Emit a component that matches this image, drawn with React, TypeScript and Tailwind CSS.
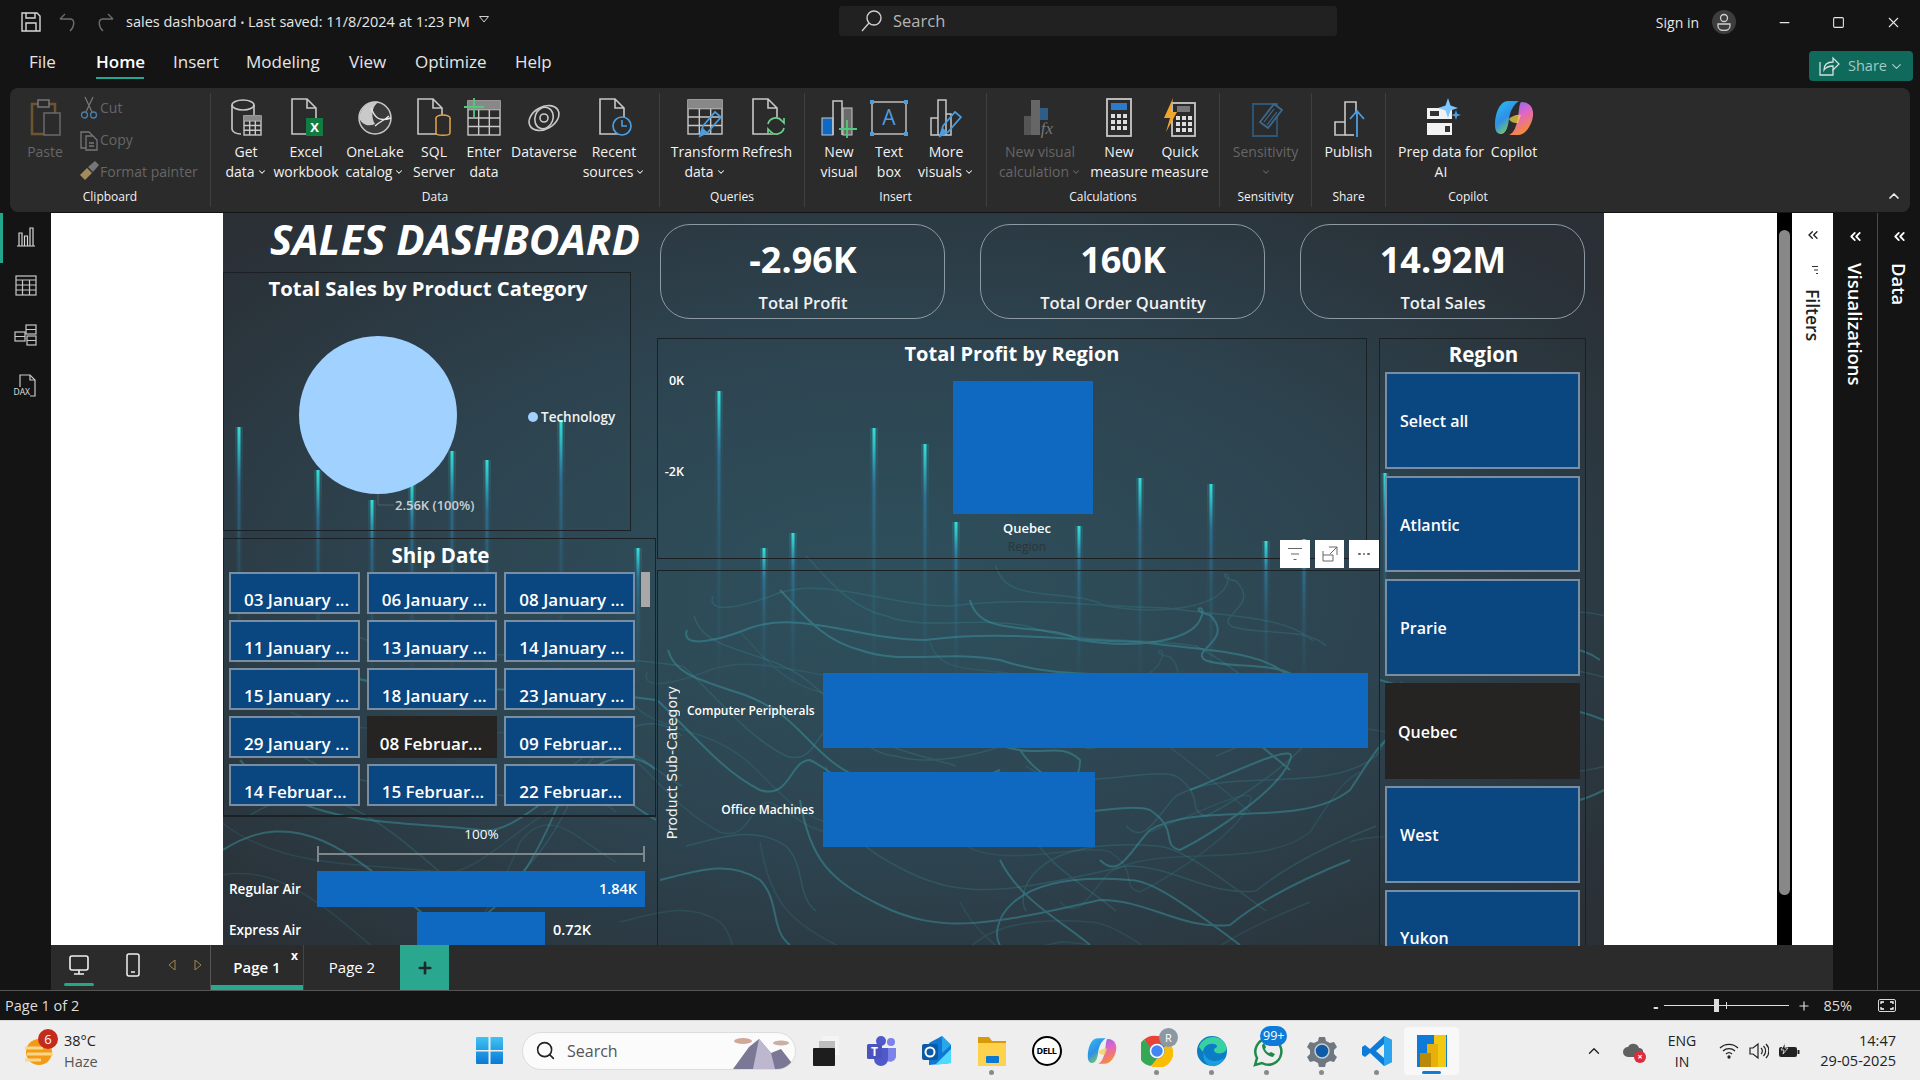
import type { ReactNode } from "react";
import { ChevronDown, Minus, Square, X, Plus, ChevronUp, ChevronsLeft, Search } from "lucide-react";

const L = "#c8c8c8";
const streaks = [
  [239, 427], [318, 470], [372, 500], [412, 480], [452, 451], [487, 460], [561, 420], [638, 548],
  [719, 391], [764, 548], [793, 533], [874, 428], [925, 444], [956, 522], [1079, 526], [1140, 478],
  [1211, 484], [1266, 541], [1304, 539], [1385, 473],
];
const contours = [
  "M668 650 C675 675 700 680 745 695 C790 712 800 735 830 760 C860 785 900 790 930 800",
  "M687 630 C680 650 720 640 750 628 C800 610 860 640 925 640 C1000 630 1060 640 1140 642 C1200 650 1260 650 1287 675",
  "M657 700 C690 730 720 770 760 790 C790 800 790 760 810 760 C830 770 850 790 870 790 C900 800 960 790 1000 770",
  "M780 590 C800 610 820 640 860 650 C900 665 950 650 1000 660 C1060 680 1110 670 1170 680 C1200 695 1230 720 1290 770",
  "M970 600 C980 640 1040 620 1080 640 C1140 650 1190 640 1200 620 C1210 600 1185 610 1210 615 C1235 640 1190 650 1205 660 C1230 670 1280 660 1300 680",
  "M1020 750 C1040 780 1080 800 1080 760 C1060 740 1040 760 1000 745",
  "M1000 800 C1040 830 1120 800 1150 810 C1180 830 1160 845 1180 850 C1210 835 1280 790 1290 760 C1300 740 1240 770 1190 790",
  "M1100 860 C1120 880 1130 850 1150 830 C1200 800 1300 830 1350 790 C1370 760 1380 740 1400 730",
  "M1240 945 C1180 900 1150 880 1130 880 C1000 870 990 930 1000 945",
  "M800 800 C810 860 830 880 880 905 C940 935 990 925 1100 900 C1150 900 1180 930 1230 925 C1260 900 1300 880 1350 860",
  "M660 880 C700 870 730 860 760 880 C780 900 770 930 790 945",
  "M1000 860 C1020 900 1060 920 1090 945",
  "M1380 680 C1440 700 1530 690 1604 720",
  "M1390 800 C1450 780 1530 830 1604 790",
  "M223 850 C300 800 360 860 430 920 C470 945 520 900 560 800 C590 760 620 800 656 820",
  "M240 760 C300 830 400 820 480 830 C530 840 600 720 656 770",
  "M330 670 C400 700 520 680 656 700",
  "M1440 640 C1480 660 1560 630 1600 660",
];

function DocShape({ x = 8, y = 2, w = 22, h = 34, c = L }: { x?: number; y?: number; w?: number; h?: number; c?: string }) {
  return <path d={`M${x} ${y}h${w - 9}l9 9v${h - 9}h-${w}z M${x + w - 9} ${y}v9h9`} fill="none" stroke={c} strokeWidth="1.6" />;
}

function Table({ x, y, w, h, c = L }: { x: number; y: number; w: number; h: number; c?: string }) {
  return (
    <g stroke={c} strokeWidth="1.4" fill="none">
      <rect x={x} y={y} width={w} height={h} />
      <path d={`M${x} ${y + h / 4}h${w} M${x} ${y + h / 2}h${w} M${x} ${y + (3 * h) / 4}h${w} M${x + w / 3} ${y + h / 4}v${(3 * h) / 4} M${x + (2 * w) / 3} ${y + h / 4}v${(3 * h) / 4}`} />
      <rect x={x} y={y} width={w} height={h / 4} fill="#888" stroke="none" />
    </g>
  );
}

function Bars({ x = 10, c = L }: { x?: number; c?: string }) {
  return <path d={`M${x} 37V20h7V2h8v14h5v21z M${x + 7} 20v17 M${x + 15} 16v21`} fill="none" stroke={c} strokeWidth="1.5" />;
}

function Pencil({ x = 0, y = 0 }: { x?: number; y?: number }) {
  return (
    <g transform={`translate(${x} ${y})`}>
      <path d="M0 22L3 12L15 -2L21 3L8 18z" fill="none" stroke="#4b9ee0" strokeWidth="1.7" />
      <path d="M0 22L3 14L7 18z" fill="#4b9ee0" />
    </g>
  );
}

function Ico({ children, s = 40 }: { children: ReactNode; s?: number }) {
  return <svg width={s} height={s} viewBox="0 0 40 40">{children}</svg>;
}

function CopilotMark({ s = 40, id }: { s?: number; id: string }) {
  return (
    <svg width={s} height={s} viewBox="0 0 40 40">
      <defs>
        <linearGradient id={id + "a"} x1="0" y1="0" x2="0.6" y2="1"><stop offset="0" stopColor="#29c3f0" /><stop offset="0.55" stopColor="#2f8fe8" /><stop offset="1" stopColor="#8bd34a" /></linearGradient>
        <linearGradient id={id + "b"} x1="0" y1="0" x2="0.4" y2="1"><stop offset="0" stopColor="#7a6cf0" /><stop offset="0.5" stopColor="#e065c8" /><stop offset="1" stopColor="#f78a3a" /></linearGradient>
      </defs>
      <path d="M14 3h11c-5 3-9 10-10 18c-1 8-3 15-8 15c-3 0-6-2-6-9C1 15 6 3 14 3z" fill={`url(#${id}a)`} />
      <path d="M27 4c5 0 11 2 12 10c1 9-6 23-15 23H15c5-2 7-8 9-17c1-7 1-13 3-16z" fill={`url(#${id}b)`} />
      <path d="M15 21c3-3 8-5 12-4l-3 8c-3 0-7 0-9-4z" fill="#f3d34a" opacity="0.75" />
    </svg>
  );
}

const icons: Record<string, ReactNode> = {
  getData: <Ico><ellipse cx="17" cy="7" rx="11" ry="5" fill="none" stroke={L} strokeWidth="1.6" /><path d="M6 7v24c0 3 4 5 9 5M28 7v10" fill="none" stroke={L} strokeWidth="1.6" /><Table x={18} y={18} w={17} h={19} /></Ico>,
  excel: <Ico><DocShape x={6} y={1} w={24} h={35} /><rect x={20} y={20} width={17} height={18} fill="#107c41" /><text x={28.5} y={34} textAnchor="middle" fontSize="13" fontWeight="700" fill="#fff" fontFamily="Open Sans, sans-serif">X</text></Ico>,
  oneLake: <Ico><circle cx="20" cy="20" r="16" fill="#3a3a3a" stroke={L} strokeWidth="1.5" /><path d="M4 20c2-12 12-18 20-16c-8 4-8 16-4 22c-6 3-13 1-16-6z" fill="#c9c9c9" /><path d="M16 10c4 10 8 14 20 10M20 28c4-4 10-6 14-10" stroke="#e8e8e8" strokeWidth="1.4" fill="none" /></Ico>,
  sql: <Ico><DocShape x={4} y={1} w={24} h={35} /><ellipse cx="29" cy="20" rx="7" ry="3" fill="#2b2b2b" stroke="#e8a34a" strokeWidth="1.5" /><path d="M22 20v15c0 3 14 3 14 0V20" fill="#2b2b2b" stroke="#e8a34a" strokeWidth="1.5" /></Ico>,
  enter: <Ico><Table x={4} y={3} w={32} h={34} /><path d="M10 -1v20M0 9h20" stroke="#4fc97a" strokeWidth="1.8" /></Ico>,
  dataverse: <Ico><g fill="none" stroke={L} strokeWidth="1.6"><ellipse cx="20" cy="20" rx="16" ry="11" transform="rotate(-30 20 20)" /><ellipse cx="20" cy="20" rx="9" ry="11" transform="rotate(20 20 20)" /><circle cx="20" cy="20" r="4" /></g></Ico>,
  recent: <Ico><DocShape x={6} y={1} w={24} h={35} /><circle cx="28" cy="28" r="9" fill="#2b2b2b" stroke="#4b9ee0" strokeWidth="1.7" /><path d="M28 22v6h5" fill="none" stroke="#4b9ee0" strokeWidth="1.6" /></Ico>,
  transform: <Ico><Table x={3} y={2} w={34} h={34} /><Pencil x={15} y={16} /></Ico>,
  refresh: <Ico><DocShape x={6} y={1} w={24} h={35} /><circle cx="29" cy="28" r="9" fill="#2b2b2b" /><path d="M21 26a8 8 0 0 1 14-3l2 2v-5M37 30a8 8 0 0 1-14 3l-2-2v5" fill="none" stroke="#6ad08a" strokeWidth="1.7" /></Ico>,
  newVisual: <Ico><rect x="3" y="20" width="11" height="17" fill="#0f69c0" stroke={L} strokeWidth="1" /><path d="M14 37V3h9v34" fill="none" stroke={L} strokeWidth="1.5" /><rect x="24" y="10" width="9" height="27" fill="#6b6b6b" stroke={L} strokeWidth="1" /><path d="M28 22v18M20 31h18" stroke="#4fc97a" strokeWidth="1.8" /></Ico>,
  textBox: <Ico><rect x="3" y="4" width="34" height="32" fill="none" stroke={L} strokeWidth="1.4" /><g fill="#4b9ee0"><rect x="1" y="2" width="4" height="4" /><rect x="35" y="2" width="4" height="4" /><rect x="1" y="34" width="4" height="4" /><rect x="35" y="34" width="4" height="4" /></g><text x="20" y="27" textAnchor="middle" fontSize="21" fill="#4b9ee0" fontFamily="Open Sans, sans-serif">A</text></Ico>,
  more: <Ico><Bars x={5} /><Pencil x={14} y={16} /></Ico>,
  calc: <Ico><rect x="4" y="18" width="7" height="19" fill="#555" /><rect x="11" y="2" width="9" height="35" fill="#666" /><rect x="20" y="10" width="8" height="12" fill="#2e5d85" /><text x="27" y="36" textAnchor="middle" fontSize="17" fontStyle="italic" fill="#777" fontFamily="Liberation Serif, serif">fx</text></Ico>,
  measure: <Ico><rect x="8" y="1" width="24" height="37" fill="none" stroke={L} strokeWidth="1.8" /><rect x="12" y="5" width="16" height="7" fill="#2c7ac9" /><g fill="#ddd">{[16, 22, 28].map((y) => [12, 18, 24].map((x) => <rect key={x + "-" + y} x={x} y={y} width="4" height="4" />))}</g></Ico>,
  quick: <Ico><rect x="12" y="5" width="23" height="33" fill="none" stroke={L} strokeWidth="1.8" /><rect x="17" y="8" width="13" height="6" fill="#777" /><g fill="#ddd">{[18, 24, 30].map((y) => [16, 22, 28].map((x) => <rect key={x + "-" + y} x={x} y={y} width="4" height="4" />))}</g><path d="M13 0L4 20h6L6 34L17 14h-6z" fill="#f0a52a" /></Ico>,
  sens: <Ico><path d="M7 6h24v32H7z" fill="none" stroke="#2f5878" strokeWidth="1.8" /><path d="M14 24L28 6l8 6L22 30z" fill="#2b2b2b" stroke="#3c6a8e" strokeWidth="1.8" /><path d="M18 24l10-13M21 27l10-13" stroke="#3c6a8e" strokeWidth="1.2" /></Ico>,
  publish: <Ico><path d="M6 37V24h10v13zM16 24V4h11v12" fill="none" stroke={L} strokeWidth="1.6" /><path d="M16 37h9" stroke={L} strokeWidth="1.6" /><path d="M28 39V13M21 21l7-8l7 8" fill="none" stroke="#4b9ee0" strokeWidth="1.8" /></Ico>,
  prep: <Ico><rect x="6" y="10" width="25" height="11" fill="#f2f2f2" /><rect x="6" y="25" width="25" height="12" fill="#f2f2f2" /><rect x="9" y="13" width="9" height="5" fill="#333" /><rect x="24" y="28" width="5" height="6" fill="#333" /><path d="M27 0l2.5 7.5L37 10l-7.5 2.5L27 20l-2.5-7.5L17 10l7.5-2.5z" fill="#7dc6ff" /><path d="M35 12l1.2 3.8L40 17l-3.8 1.2L35 22l-1.2-3.8L30 17l3.8-1.2z" fill="#4b9ee0" /></Ico>,
};

function Item({ w, icon, l1, l2, chev, dim }: { w: number; icon: ReactNode; l1: string; l2?: string; chev?: boolean; dim?: boolean }) {
  return (
    <div style={{ width: w }} className={`flex flex-col items-center text-[14px] leading-[20px] whitespace-nowrap ${dim ? "text-[#666666]" : "text-[#f2f2f2]"}`}>
      <div className="h-[40px] mb-[4px] flex justify-center">{icon}</div>
      <div>{l1}</div>
      <div className="flex items-center gap-[2px] h-[20px]">
        {l2}
        {chev && <ChevronDown size={10} strokeWidth={2.5} />}
      </div>
    </div>
  );
}

function Group({ w, label, pl = 0, last, children }: { w: number; label: string; pl?: number; last?: boolean; children: ReactNode }) {
  return (
    <div style={{ width: w }} className={`h-[114px] mt-[5px] flex flex-col shrink-0 ${last ? "" : "border-r border-[#3f3f3f]"}`}>
      <div style={{ paddingLeft: pl }} className="h-[94px] pt-[5px] flex">{children}</div>
      <div className="h-[20px] text-center text-[12px] leading-[20px] text-[#f2f2f2]">{label}</div>
    </div>
  );
}

function Ribbon() {
  return (
    <div className="mx-[10px] h-[124px] rounded-[8px] bg-[#2b2b2b] flex relative">
      <Group w={201} label="Clipboard">
        <Item w={70} dim l1="Paste" icon={<Ico><rect x="7" y="6" width="23" height="30" fill="none" stroke="#6e5530" strokeWidth="2.5" /><rect x="13" y="2" width="11" height="7" fill="#2b2b2b" stroke="#777" strokeWidth="1.5" /><rect x="19" y="15" width="16" height="22" fill="#2b2b2b" stroke="#666" strokeWidth="1.6" /></Ico>} />
        <div className="flex flex-col text-[14px] text-[#666666] -mt-[6px]">
          <div className="h-[33px] flex items-center gap-[2px]">
            <svg width="18" height="24" viewBox="0 0 18 24" fill="none" stroke="#777" strokeWidth="1.3"><path d="M5 1l7 15M13 1L6 16" /><circle cx="4.5" cy="19" r="3" stroke="#4a7ea8" /><circle cx="13.5" cy="19" r="3" stroke="#4a7ea8" /></svg>
            <span>Cut</span>
          </div>
          <div className="h-[33px] flex items-center gap-[2px]">
            <svg width="18" height="22" viewBox="0 0 18 22" fill="none" stroke="#777" strokeWidth="1.3"><path d="M1 3h8l3 3v13H1z" /><path d="M6 7h7l4 4v10H6z" fill="#2b2b2b" /><path d="M9 14h5M9 17h5" /></svg>
            <span>Copy</span>
          </div>
          <div className="h-[32px] flex items-center gap-0 -ml-[2px]">
            <svg width="22" height="22" viewBox="0 0 22 22"><path d="M2 15l7-7l5 5l-7 7z" fill="#a58a5c" /><path d="M10 7l7-6l4 4l-6 7z" fill="#777" /></svg>
            <span>Format painter</span>
          </div>
        </div>
      </Group>
      <Group w={449} label="Data" pl={3}>
        <Item w={64} l1="Get" l2="data" chev icon={icons.getData} />
        <Item w={56} l1="Excel" l2="workbook" icon={icons.excel} />
        <Item w={82} l1="OneLake" l2="catalog" chev icon={icons.oneLake} />
        <Item w={36} l1="SQL" l2="Server" icon={icons.sql} />
        <Item w={64} l1="Enter" l2="data" icon={icons.enter} />
        <Item w={56} l1="Dataverse" icon={icons.dataverse} />
        <Item w={84} l1="Recent" l2="sources" chev icon={icons.recent} />
      </Group>
      <Group w={145} label="Queries" pl={12}>
        <Item w={66} l1="Transform" l2="data" chev icon={icons.transform} />
        <Item w={58} l1="Refresh" icon={icons.refresh} />
      </Group>
      <Group w={182} label="Insert" pl={6}>
        <Item w={56} l1="New" l2="visual" icon={icons.newVisual} />
        <Item w={44} l1="Text" l2="box" icon={icons.textBox} />
        <Item w={70} l1="More" l2="visuals" chev icon={icons.more} />
      </Group>
      <Group w={233} label="Calculations">
        <Item w={106} dim l1="New visual" l2="calculation" chev icon={icons.calc} />
        <Item w={52} l1="New" l2="measure" icon={icons.measure} />
        <Item w={70} l1="Quick" l2="measure" icon={icons.quick} />
      </Group>
      <Group w={92} label="Sensitivity">
        <Item w={91} dim l1="Sensitivity" chev icon={icons.sens} />
      </Group>
      <Group w={74} label="Share">
        <Item w={73} l1="Publish" icon={icons.publish} />
      </Group>
      <Group w={164} label="Copilot" last>
        <Item w={110} l1="Prep data for" l2="AI" icon={icons.prep} />
        <Item w={36} l1="Copilot" icon={<CopilotMark id="rb" />} />
      </Group>
      <div className="ml-auto mr-[8px] self-end mb-[8px] text-[#eeeeee]"><ChevronUp size={16} strokeWidth={2.5} /></div>
    </div>
  );
}

function TitleBar() {
  return (
    <div className="h-[44px] flex items-center text-[#e6e6e6] relative">
      <svg className="ml-[21px]" width="20" height="20" viewBox="0 0 20 20" fill="none" stroke="#d8d8d8" strokeWidth="1.4"><path d="M1 1h15l3 3v15H1z" /><path d="M5 1v5h9V1M5 19v-8h10v8" /></svg>
      <svg className="ml-[18px]" width="18" height="20" viewBox="0 0 18 20" fill="none" stroke="#6d6d6d" strokeWidth="1.4"><path d="M1 7l5-5M1 7h10c5 0 5 7 0 12" /></svg>
      <svg className="ml-[19px]" width="18" height="20" viewBox="0 0 18 20" fill="none" stroke="#6d6d6d" strokeWidth="1.4"><path d="M17 7l-5-5M17 7H7c-5 0-5 7 0 12" /></svg>
      <div className="ml-[12px] text-[14.5px] whitespace-nowrap">sales dashboard <span className="text-[10px] align-middle">•</span> Last saved: 11/8/2024 at 1:23 PM</div>
      <svg className="ml-[9px] -mt-[6px]" width="10" height="7" viewBox="0 0 10 7" fill="none" stroke="#cfcfcf"><path d="M0.5 0.5h9L5 6z" /></svg>
      <div className="absolute left-[839px] top-[6px] w-[498px] h-[30px] rounded-[3px] bg-[#212121] flex items-center pl-[21px] text-[16.5px] text-[#b5b5b5]">
        <svg width="24" height="24" viewBox="0 0 24 24" fill="none" stroke="#cfcfcf" strokeWidth="1.4"><circle cx="14" cy="9" r="7" /><path d="M9 14l-7 8" /></svg>
        <span className="ml-[9px]">Search</span>
      </div>
      <div className="ml-auto flex items-center">
        <span className="text-[14px]">Sign in</span>
        <div className="ml-[13px] w-[24px] h-[24px] rounded-full bg-[#3d3d3d] flex items-center justify-center">
          <svg width="16" height="18" viewBox="0 0 16 18" fill="none" stroke="#cfcfcf" strokeWidth="1.3"><circle cx="8" cy="5" r="3.5" /><path d="M2 11h12v2c0 6-12 6-12 0z" /></svg>
        </div>
        <div className="w-[54px] ml-[21px] flex justify-center"><Minus size={15} /></div>
        <div className="w-[55px] flex justify-center"><Square size={13} /></div>
        <div className="w-[54px] flex justify-center"><X size={17} strokeWidth={1.5} /></div>
      </div>
    </div>
  );
}

const widths = [28, 48, 48, 72, 38, 70, 38];

function MenuBar() {
  const items = [["File", 29, ""], ["Home", 96, "font-semibold text-white"], ["Insert", 173, ""], ["Modeling", 246, ""], ["View", 349, ""], ["Optimize", 415, ""], ["Help", 515, ""]] as const;
  return (
    <div className="h-[44px] flex items-center text-[17px] text-[#e6e6e6] relative">
      {items.map(([t, x, cls], i) => (
        <div key={t} style={{ marginLeft: i === 0 ? x : x - items[i - 1][1] - widths[i - 1] }} className={`h-[44px] flex items-center relative pb-[8px] ${cls}`}>
          <span style={{ width: widths[i] }} className="whitespace-nowrap">{t}</span>
          {t === "Home" && <div className="absolute bottom-[9px] left-0 right-0 h-[2px] bg-[#22a68c]" />}
        </div>
      ))}
      <div className="ml-auto mr-[7px] w-[104px] h-[30px] rounded-[4px] bg-[#0f6a5c] flex items-center pl-[9px] text-[14.5px] text-[#a6c8c2]">
        <svg width="22" height="20" viewBox="0 0 22 20" fill="none" stroke="#cfe0dc" strokeWidth="1.3"><path d="M2 6v13h13v-5" /><path d="M6 14c0-6 4-8 9-8V2l6 6l-6 6v-4c-4 0-7 1-9 4z" /></svg>
        <span className="ml-[8px]">Share</span>
        <ChevronDown size={15} className="ml-[2px]" />
      </div>
    </div>
  );
}

function Background() {
  return (
    <svg className="absolute inset-0" width="1381" height="732" viewBox="223 213 1381 732">
      <defs>
        <linearGradient id="st" x1="0" y1="0" x2="0" y2="1">
          <stop offset="0" stopColor="#35e6dc" stopOpacity="0.95" />
          <stop offset="0.08" stopColor="#2fc8d2" stopOpacity="0.85" />
          <stop offset="0.22" stopColor="#2c8cc0" stopOpacity="0.5" />
          <stop offset="0.5" stopColor="#2c86a8" stopOpacity="0.22" />
          <stop offset="1" stopColor="#2c86a8" stopOpacity="0" />
        </linearGradient>
      </defs>
      <g fill="none" stroke="#3c9ea8" strokeWidth="2" opacity="0.45">
        {contours.map((d) => <path key={d} d={d} />)}
      </g>
      <g fill="none" stroke="#3c9ea8" strokeWidth="1.5" opacity="0.22" transform="translate(26 -34)">
        {contours.map((d) => <path key={d} d={d} />)}
      </g>
      <g fill="none" stroke="#3c9ea8" strokeWidth="1.5" opacity="0.16" transform="translate(-40 42)">
        {contours.map((d) => <path key={d} d={d} />)}
      </g>
      {streaks.map(([x, y]) => (
        <g key={x}>
          <rect x={x - 4} y={y} width="8" height={690 - y} fill="url(#st)" opacity="0.15" />
          <rect x={x - 1.5} y={y} width="3" height={690 - y} fill="url(#st)" />
        </g>
      ))}
    </svg>
  );
}

const shipDates = ["03 January ...", "06 January ...", "08 January ...", "11 January ...", "13 January ...", "14 January ...", "15 January ...", "18 January ...", "23 January ...", "29 January ...", "08 Februar...", "09 Februar...", "14 Februar...", "15 Februar...", "22 Februar..."];

function LeftColumn() {
  return (
    <div className="w-[433px] shrink-0 text-white">
      <div className="h-[59px] pl-[47px] pt-[2px] text-[42px] leading-[48px] font-bold italic whitespace-nowrap">SALES DASHBOARD</div>
      <div className="w-[408px] h-[259px] border border-[#1b2024] flex flex-col">
        <div className="text-center text-[20.25px] leading-[30px] font-bold pl-[2px]">Total Sales by Product Category</div>
        <svg className="mt-[1px]" width="406" height="226" viewBox="224 304 406 226">
          <circle cx="378" cy="415" r="79" fill="#a0d1ff" />
          <path d="M378 494v11h16" fill="none" stroke="#555d63" />
          <text x="395" y="510" fontSize="13" fontWeight="600" fill="#cfcfcf">2.56K (100%)</text>
          <circle cx="533" cy="417" r="5" fill="#a0d1ff" />
          <text x="541" y="421.5" fontSize="13.5" fontWeight="600" fill="#f2f2f2">Technology</text>
        </svg>
      </div>
      <div className="mt-[7px] h-[278px] border border-[#1b2024] relative">
        <div className="text-center text-[20.5px] leading-[30px] font-bold pt-[1px] pl-[2px]">Ship Date</div>
        <div className="ml-[5px] mt-[2px] w-[406px] grid grid-cols-3 gap-x-[7px] gap-y-[6px]">
          {shipDates.map((d) => (
            <div key={d} className={`h-[42px] flex items-end pl-[13px] text-[17px] leading-[24px] font-semibold whitespace-nowrap ${d.startsWith("08 F") ? "bg-[#252423] pb-[2px]" : "bg-[#0a467f] border-2 border-[#7a8ea3]"}`}>{d}</div>
          ))}
        </div>
        <div className="absolute left-[417px] top-[33px] w-[9px] h-[35px] bg-[#a8a8a8]" />
      </div>
      <div className="h-[129px] border-t border-[#1b2024] overflow-hidden text-[13.5px] font-semibold">
        <div className="ml-[94px] mt-[8px] w-[328px] h-[18px] leading-[18px] text-center font-normal pl-[1px]">100%</div>
        <div className="ml-[94px] mt-[3px] w-[328px] h-[16px] border-x-2 border-[#80878c] flex items-center"><div className="h-[2px] w-full bg-[#80878c]" /></div>
        <div className="mt-[9px] h-[36px] flex items-center">
          <span className="w-[94px] pl-[6px] whitespace-nowrap">Regular Air</span>
          <div className="w-[328px] h-full bg-[#0f69c0] flex items-center justify-end pr-[8px] text-[14.5px]">1.84K</div>
        </div>
        <div className="mt-[5px] h-[36px] flex items-center">
          <span className="w-[94px] pl-[6px] whitespace-nowrap">Express Air</span>
          <div className="ml-[100px] w-[128px] h-full bg-[#0f69c0]" />
          <span className="ml-[8px] text-[14.5px]">0.72K</span>
        </div>
      </div>
    </div>
  );
}

function Kpi({ v, l }: { v: string; l: string }) {
  return (
    <div className="w-[285px] h-[95px] rounded-[30px] border border-[#8d9aa3] flex flex-col items-center pl-[1px]">
      <div className="mt-[12px] text-[36px] leading-[46px] font-bold">{v}</div>
      <div className="mt-[8px] text-[16.5px] leading-[24px] font-semibold text-[#f0f0f0]">{l}</div>
    </div>
  );
}

function RightBlock() {
  return (
    <div className="flex-1 ml-[1px] text-white">
      <div className="pt-[11px] pl-[3px] h-[125px] flex gap-[35px]">
        <Kpi v="-2.96K" l="Total Profit" />
        <Kpi v="160K" l="Total Order Quantity" />
        <Kpi v="14.92M" l="Total Sales" />
      </div>
      <div className="flex">
        <div className="w-[722px] relative">
          <div className="w-[710px] h-[221px] border border-[#1b2024]">
            <div className="text-center text-[20px] leading-[30px] font-bold">Total Profit by Region</div>
            <div className="flex">
              <div className="w-[26px] pt-[4px] text-right text-[12.5px] leading-[16px] font-semibold">
                <div>0K</div>
                <div className="mt-[75px]">-2K</div>
              </div>
              <div className="ml-[269px] w-[140px] pt-[12px]">
                <div className="h-[133px] bg-[#0f69c0]" />
                <div className="ml-[8px] mt-[6px] text-center text-[13px] leading-[16px] font-semibold">Quebec</div>
                <div className="ml-[8px] mt-[3px] text-center text-[12px] leading-[16px] text-[#2c3438]">Region</div>
              </div>
            </div>
          </div>
          <div className="absolute left-[623px] top-[202px] flex gap-[5px]">
            <div className="w-[30px] h-[28px] bg-white flex items-center justify-center">
              <svg width="16" height="14" viewBox="0 0 16 14" stroke="#666" fill="none"><path d="M1 1.5h14M4 7h8M6.5 12.5h3" /></svg>
            </div>
            <div className="w-[29px] h-[28px] bg-white flex items-center justify-center">
              <svg width="16" height="16" viewBox="0 0 16 16" stroke="#666" fill="none"><path d="M1 5v10h10V9H1M7 1h8v8M15 1L8 8" /></svg>
            </div>
            <div className="w-[30px] h-[28px] bg-white flex items-center justify-center gap-[2px]">
              {[0, 1, 2].map((i) => <div key={i} className="w-[2.5px] h-[2.5px] rounded-full bg-[#666666]" />)}
            </div>
          </div>
          <div className="mt-[11px] h-[376px] border-l border-t border-[#1b2024] flex">
            <div className="w-[29px] pt-[115px] flex justify-center items-start">
              <div className="[writing-mode:vertical-rl] rotate-180 text-[14px] font-['DejaVu_Sans'] text-[#f0f0f0] whitespace-nowrap">Product Sub-Category</div>
            </div>
            <div className="pt-[102px] text-[12px] font-semibold">
              <div className="flex items-center h-[75px]">
                <span className="w-[136px] pr-[9px] text-right whitespace-nowrap">Computer Peripherals</span>
                <div className="w-[545px] h-full bg-[#0f69c0]" />
              </div>
              <div className="flex items-center h-[75px] mt-[24px]">
                <span className="w-[136px] pr-[9px] text-right whitespace-nowrap">Office Machines</span>
                <div className="w-[272px] h-full bg-[#0f69c0]" />
              </div>
            </div>
          </div>
        </div>
        <div className="w-[207px] h-[607px] border-x border-t border-[#1b2024]">
          <div className="h-[33px] text-center text-[20.5px] leading-[30px] font-bold pl-[2px]">Region</div>
          <div className="ml-[5px] w-[195px] flex flex-col gap-[7px]">
            {["Select all", "Atlantic", "Prarie", "Quebec", "West"].map((r) => (
              <div key={r} className={`h-[96.5px] shrink-0 flex items-center pl-[13px] pt-[2px] text-[16px] leading-[18px] font-semibold ${r === "Quebec" ? "bg-[#252423]" : "bg-[#0a467f] border-2 border-[#7a8ea3]"}`}>{r}</div>
            ))}
            <div className="h-[56px] shrink-0 pl-[13px] pt-[37px] text-[16px] leading-[18px] font-semibold bg-[#0a467f] border-2 border-b-0 border-[#7a8ea3]">Yukon</div>
          </div>
        </div>
      </div>
    </div>
  );
}

function Canvas() {
  return (
    <div className="h-[732px] flex">
      <div className="w-[172px] bg-white" />
      <div className="w-[1381px] relative bg-[radial-gradient(ellipse_at_48%_52%,#2e505d_0%,#2d4450_48%,#2a3036_90%)]">
        <Background />
        <div className="relative flex h-full">
          <LeftColumn />
          <RightBlock />
        </div>
      </div>
      <div className="w-[173px] bg-white" />
      <div className="w-[15px] bg-black pt-[17px] pl-[2px]">
        <div className="w-[11px] h-[665px] rounded-full bg-[#888888]" />
      </div>
      <div className="w-[41px] bg-white flex flex-col items-center text-[#222222] pt-[14px]">
        <ChevronsLeft size={16} />
        <svg className="mt-[22px]" width="12" height="12" viewBox="0 0 12 12" stroke="#333" fill="none"><path d="M5 1.5h6M7 5h4M9 8.5h2" /></svg>
        <div className="mt-[12px] [writing-mode:vertical-rl] text-[17.5px] font-semibold leading-none">Filters</div>
      </div>
    </div>
  );
}

function Side({ label, w, border }: { label: string; w: number; border?: boolean }) {
  return (
    <div style={{ width: w }} className={`h-[777px] flex flex-col items-center pt-[15px] text-white ${border ? "border-l border-[#4a4a4a]" : ""}`}>
      <ChevronsLeft size={17} strokeWidth={2.5} />
      <div className="mt-[18px] [writing-mode:vertical-rl] text-[18.5px] font-semibold leading-none">{label}</div>
    </div>
  );
}

function Tabs() {
  return (
    <div className="h-[45px] bg-[#2b2b2b] flex text-[15px] text-white">
      <div className="w-[160px] flex items-center border-r border-[#555555] relative pb-[6px]">
        <svg className="ml-[17px]" width="22" height="22" viewBox="0 0 22 22" fill="none" stroke="#f0f0f0" strokeWidth="1.6"><rect x="2" y="2" width="18" height="14" rx="2" /><path d="M6 20h10M11 16v4" /></svg>
        <div className="absolute left-[13px] bottom-[4px] w-[30px] h-[3px] rounded-full bg-[#22a68c]" />
        <svg className="ml-[36px]" width="14" height="24" viewBox="0 0 14 24" fill="none" stroke="#f0f0f0" strokeWidth="1.5"><rect x="1" y="1" width="12" height="22" rx="2" /><path d="M5 19h4" /></svg>
        <svg className="ml-[28px]" width="8" height="12" viewBox="0 0 8 12" fill="none" stroke="#a08650"><path d="M7 1L1 6l6 5z" /></svg>
        <svg className="ml-[18px]" width="8" height="12" viewBox="0 0 8 12" fill="none" stroke="#a08650"><path d="M1 1l6 5l-6 5z" /></svg>
      </div>
      <div className="w-[93px] relative flex items-center justify-center font-semibold border-r border-[#444444]">
        Page 1
        <span className="absolute right-[5px] top-[2px] text-[12px] font-bold">x</span>
        <div className="absolute inset-x-0 bottom-0 h-[5px] bg-[#2aa88f]" />
      </div>
      <div className="w-[96px] flex items-center justify-center">Page 2</div>
      <div className="w-[49px] bg-[#2aa88f] flex items-center justify-center"><Plus size={18} strokeWidth={3.5} color="#1f2a2a" /></div>
    </div>
  );
}

function StatusBar() {
  return (
    <div className="h-[30px] border-t border-[#555555] bg-[#141414] flex items-center pl-[5px] text-[14.5px] text-[#dddddd] relative">
      Page 1 of 2
      <div className="ml-auto flex items-center pr-[24px]">
        <span className="text-[16px] font-bold">-</span>
        <div className="ml-[6px] w-[125px] h-px bg-[#dddddd] relative">
          <div className="absolute left-[50px] -top-[6px] w-[5px] h-[13px] bg-[#dddddd]" />
          <div className="absolute left-[62px] -top-[3px] w-px h-[7px] bg-[#dddddd]" />
        </div>
        <Plus size={14} strokeWidth={2} className="ml-[8px]" />
        <span className="ml-[12px] text-[14.5px]">85%</span>
        <svg className="ml-[26px]" width="18" height="13" viewBox="0 0 18 13" fill="none" stroke="#d8d8d8"><rect x="0.5" y="0.5" width="17" height="12" rx="1.5" /><path d="M6 3H3v2M12 3h3v2M6 10H3V8M12 10h3V8" stroke="#fff" strokeWidth="1.3" /></svg>
      </div>
    </div>
  );
}

function LeftNav() {
  return (
    <div className="w-[51px] h-[777px] relative flex flex-col items-center pt-[12px] gap-[27px]">
      <div className="absolute left-0 top-0 w-[3px] h-[50px] bg-[#22a68c]" />
      <svg width="20" height="22" viewBox="0 0 20 22" fill="none" stroke="#d8d8d8" strokeWidth="1.2"><path d="M1 21h18M3 8h3v13H3zM8.5 11h3v10h-3zM14 3h3v18h-3z" /></svg>
      <svg width="22" height="22" viewBox="0 0 22 22" fill="none" stroke="#c8c8c8" strokeWidth="1.2"><rect x="1" y="2" width="20" height="19" /><path d="M1 6h20M1 11h20M1 16h20M7.5 6v15M14.5 6v15" /></svg>
      <svg width="24" height="24" viewBox="0 0 24 24" fill="none" stroke="#c8c8c8" strokeWidth="1.2"><rect x="1" y="9" width="10" height="9" /><rect x="12" y="2" width="10" height="9" /><rect x="13" y="13" width="9" height="9" /><path d="M1 13.5h10M12 6.5h10M13 17.5h9" /></svg>
      <div className="relative w-[24px] h-[26px]">
        <svg width="24" height="24" viewBox="0 0 24 24" fill="none" stroke="#c8c8c8" strokeWidth="1.2"><path d="M6 14V1h10l5 5v16h-6" /><path d="M16 1v5h5" /></svg>
        <span className="absolute left-0 top-[13px] text-[8.5px] leading-[10px] text-[#e0e0e0] bg-[#141414]">DAX</span>
      </div>
    </div>
  );
}

function Task({ children, dot, active }: { children: ReactNode; dot?: boolean; active?: boolean }) {
  return (
    <div className={`w-[55px] h-[48px] flex items-center justify-center relative ${active ? "bg-[#f8f8f8] rounded-[4px]" : ""}`}>
      {children}
      {dot && <div className="absolute bottom-[0px] left-[25px] w-[5px] h-[5px] rounded-full bg-[#8a8a8a]" />}
      {active && <div className="absolute bottom-[1px] left-[18px] w-[19px] h-[3px] rounded-full bg-[#0f7bd8]" />}
    </div>
  );
}

function Taskbar() {
  return (
    <div className="h-[60px] bg-[#eeeeee] border-t border-[#d8d8d8] flex items-center text-[#222222] text-[14.5px]">
      <div className="w-[475px] shrink-0 flex items-center pl-[24px] relative">
        <svg width="30" height="34" viewBox="0 0 30 34"><circle cx="15" cy="18" r="13" fill="#f39a17" /><path d="M1 14h18M3 20h26M1 26h16" stroke="#f7d88a" strokeWidth="3" /></svg>
        <div className="absolute left-[38px] -top-[1px] w-[20px] h-[20px] rounded-full bg-[#c42b1c] text-white text-[13px] leading-[20px] text-center">6</div>
        <div className="ml-[10px] leading-[21px]">
          <div>38°C</div>
          <div className="text-[#555555]">Haze</div>
        </div>
      </div>
      <svg width="29" height="29" viewBox="0 0 29 29">
        <defs><linearGradient id="win" x1="0" y1="0" x2="0" y2="1"><stop offset="0" stopColor="#3fc3f4" /><stop offset="1" stopColor="#0a78d4" /></linearGradient></defs>
        <path d="M1 2a1 1 0 0 1 1-1h11.5v13H1zM15.5 1H27a1 1 0 0 1 1 1v12H15.5zM1 15.5h12.5V28H2a1 1 0 0 1-1-1zM15.5 15.5H28V27a1 1 0 0 1-1 1H15.5z" fill="url(#win)" />
      </svg>
      <div className="ml-[18px] w-[274px] h-[38px] rounded-full bg-[#fbfbfb] border border-[#dcdcdc] flex items-center pl-[12px] relative overflow-hidden">
        <Search size={21} strokeWidth={1.8} color="#222" />
        <span className="ml-[11px] text-[16px] text-[#555555]">Search</span>
        <svg className="absolute right-0 bottom-0" width="66" height="36" viewBox="0 0 66 36">
          <path d="M4 36L20 14L30 6L42 20L52 16L66 34V36z" fill="#7a7894" />
          <path d="M30 6L24 36H46L42 20z" fill="#bdb8cf" />
          <ellipse cx="14" cy="8" rx="9" ry="3" fill="#cfa898" />
          <ellipse cx="52" cy="10" rx="8" ry="2.5" fill="#c9b0a4" />
        </svg>
      </div>
      <div className="ml-[3px] flex items-center">
        <Task><svg width="30" height="32" viewBox="0 0 30 32"><rect x="10" y="1" width="17" height="19" fill="#f4f4f4" /><rect x="7" y="6" width="16" height="17" fill="#bdbdbd" /><rect x="1" y="13" width="22" height="18" rx="1" fill="#1d1d1d" /></svg></Task>
        <Task><svg width="32" height="32" viewBox="0 0 32 32"><circle cx="25" cy="7" r="4" fill="#7b83eb" /><path d="M20 13h10v9a6 6 0 0 1-10 3z" fill="#7b83eb" /><circle cx="15" cy="6" r="5" fill="#5059c9" /><path d="M8 13h14v11a7 7 0 0 1-14 0z" fill="#5059c9" /><rect x="1" y="9" width="15" height="15" rx="1.5" fill="#4b53bc" /><text x="8.5" y="21" textAnchor="middle" fontSize="12" fontWeight="700" fill="#fff" fontFamily="Open Sans, sans-serif">T</text></svg></Task>
        <Task><svg width="32" height="32" viewBox="0 0 32 32"><path d="M8 8L21 1l9 9v18l-22 2z" fill="#0f78d4" /><path d="M21 1l9 9L21 18z" fill="#28a8ea" /><path d="M14 30l16-16v14z" fill="#50d9ff" /><rect x="1" y="9" width="16" height="16" rx="2" fill="#0a5aa8" /><circle cx="9" cy="17" r="4.5" fill="none" stroke="#fff" strokeWidth="2" /></svg></Task>
        <Task dot><svg width="30" height="32" viewBox="0 0 30 32"><path d="M1 2h11l3 4h14v3H1z" fill="#d99a0a" /><rect x="1" y="8" width="28" height="23" fill="#ffd24d" /><rect x="9" y="21" width="13" height="7" rx="1" fill="#0a78d4" /></svg></Task>
        <Task>
          <div className="w-[30px] h-[30px] rounded-full border-2 border-black bg-white flex items-center justify-center text-[9px] font-bold tracking-[-0.5px] text-black">DELL</div>
        </Task>
        <Task><CopilotMark s={30} id="tb" /></Task>
        <Task dot>
          <svg width="32" height="32" viewBox="0 0 32 32"><circle cx="16" cy="16" r="15" fill="#4285f4" /><path d="M16 1a15 15 0 0 1 13 7.5H16a7.5 7.5 0 0 0-6.5 3.75L3 4.5A15 15 0 0 1 16 1z" fill="#ea4335" /><path d="M3 4.5l6.5 7.75A7.5 7.5 0 0 0 16 23.5L10 31A15 15 0 0 1 3 4.5z" fill="#34a853" /><path d="M29 8.5A15 15 0 0 1 10 31l6-7.5a7.5 7.5 0 0 0 6.5-11.25z" fill="#fbbc05" /><circle cx="16" cy="16" r="6.5" fill="#4285f4" stroke="#fff" strokeWidth="1.5" /></svg>
          <div className="absolute right-[6px] top-[1px] w-[19px] h-[19px] rounded-full bg-[#8c99a3] text-white text-[11px] leading-[19px] text-center">R</div>
        </Task>
        <Task dot><svg width="32" height="32" viewBox="0 0 32 32"><circle cx="16" cy="16" r="15" fill="#0c7cc4" /><path d="M3 12C6 2 20-2 28 7c4 5 3 10-2 11c-4 1-8 0-8-3c0-2 3-2 3-4C19 7 8 8 7 17z" fill="#37d2a0" /><path d="M16 31c-6-1-10-7-8-14c1 8 10 12 20 6c-2 5-7 9-12 8z" fill="#1b9de2" /></svg></Task>
        <Task dot>
          <svg width="32" height="32" viewBox="0 0 32 32" fill="none"><path d="M4 30l2-7a13 13 0 1 1 5 5z" stroke="#1f8a4c" strokeWidth="2.5" /><path d="M11 10c0 6 5 11 11 12l2-3l-4-2l-2 1c-2-1-3-2-4-4l1-2l-2-4z" fill="#1f8a4c" /></svg>
          <div className="absolute left-[21px] top-[-1px] h-[20px] px-[3px] rounded-full bg-[#0f7bd8] text-white text-[12.5px] leading-[20px]">99+</div>
        </Task>
        <Task dot><svg width="32" height="32" viewBox="0 0 32 32"><path d="M13 2h6l1 4l4 2l4-1l3 5l-3 3v4l3 3l-3 5l-4-1l-4 2l-1 4h-6l-1-4l-4-2l-4 1l-3-5l3-3v-4l-3-3l3-5l4 1l4-2z" fill="#6f7780" /><circle cx="16" cy="16" r="7" fill="#0f5ba8" stroke="#c7ccd1" strokeWidth="1.5" /></svg></Task>
        <Task dot><svg width="32" height="32" viewBox="0 0 32 32"><path d="M23 1l8 4v22l-8 4L9 18l-5 4l-3-2v-8l3-2l5 4z" fill="#0f7bd8" /><path d="M23 9l-8 7l8 7z" fill="#eeeeee" /><path d="M23 1l8 4v22l-8 4z" fill="#2aa5ee" /></svg></Task>
        <Task active><svg width="30" height="34" viewBox="0 0 30 34"><rect x="0" y="1" width="30" height="32" fill="#0f7bd8" /><rect x="17" y="1" width="12" height="32" fill="#f2c811" /><rect x="10" y="10" width="11" height="23" fill="#e8b00b" /><rect x="3" y="19" width="11" height="14" fill="#b88a07" /></svg></Task>
      </div>
      <div className="ml-auto w-[335px] pr-[24px] flex items-center">
        <ChevronUp size={18} strokeWidth={1.8} />
        <div className="ml-[20px] relative w-[22px] h-[18px]">
          <svg width="20" height="16" viewBox="0 0 20 16" fill="#606060"><path d="M5 15a5 5 0 0 1 0-10a6 6 0 0 1 11 1a4.5 4.5 0 0 1 0 9z" /></svg>
          <div className="absolute -right-[1px] bottom-[-3px] w-[12px] h-[12px] rounded-full bg-[#e02b3c] text-white text-[9px] leading-[11px] text-center font-bold">×</div>
        </div>
        <div className="ml-[22px] w-[30px] text-center leading-[21px] text-[14px]">ENG<br />IN</div>
        <svg className="ml-[22px]" width="20" height="16" viewBox="0 0 20 16" fill="none" stroke="#222" strokeWidth="1.3"><path d="M1 5a13 13 0 0 1 18 0M4 8a9 9 0 0 1 12 0M7 11a4.5 4.5 0 0 1 6 0" /><circle cx="10" cy="14" r="1" fill="#222" /></svg>
        <svg className="ml-[10px]" width="20" height="18" viewBox="0 0 20 18" fill="none" stroke="#222" strokeWidth="1.2"><path d="M1 6v6h3l5 4V2L4 6z" /><path d="M12 6a4 4 0 0 1 0 6M14.5 4a7 7 0 0 1 0 10M17 2a10 10 0 0 1 0 14" /></svg>
        <svg className="ml-[9px]" width="22" height="16" viewBox="0 0 22 16" fill="#222"><rect x="1" y="4" width="18" height="10" rx="2" /><rect x="19.5" y="7" width="2" height="4" /><path d="M7 0L3 7h3l-1 4l5-6H7z" stroke="#eee" strokeWidth="0.8" /></svg>
        <div className="ml-auto text-right leading-[20px] text-[14.5px]">14:47<br />29-05-2025</div>
      </div>
    </div>
  );
}

export default function App() {
  return (
    <div className="w-[1920px] h-[1080px] overflow-hidden bg-[#141414] font-['Open_Sans',sans-serif]">
      <TitleBar />
      <MenuBar />
      <Ribbon />
      <div className="h-px" />
      <div className="flex">
        <LeftNav />
        <div className="w-[1782px]">
          <Canvas />
          <Tabs />
        </div>
        <Side label="Visualizations" w={44} />
        <Side label="Data" w={43} border />
      </div>
      <StatusBar />
      <Taskbar />
    </div>
  );
}
